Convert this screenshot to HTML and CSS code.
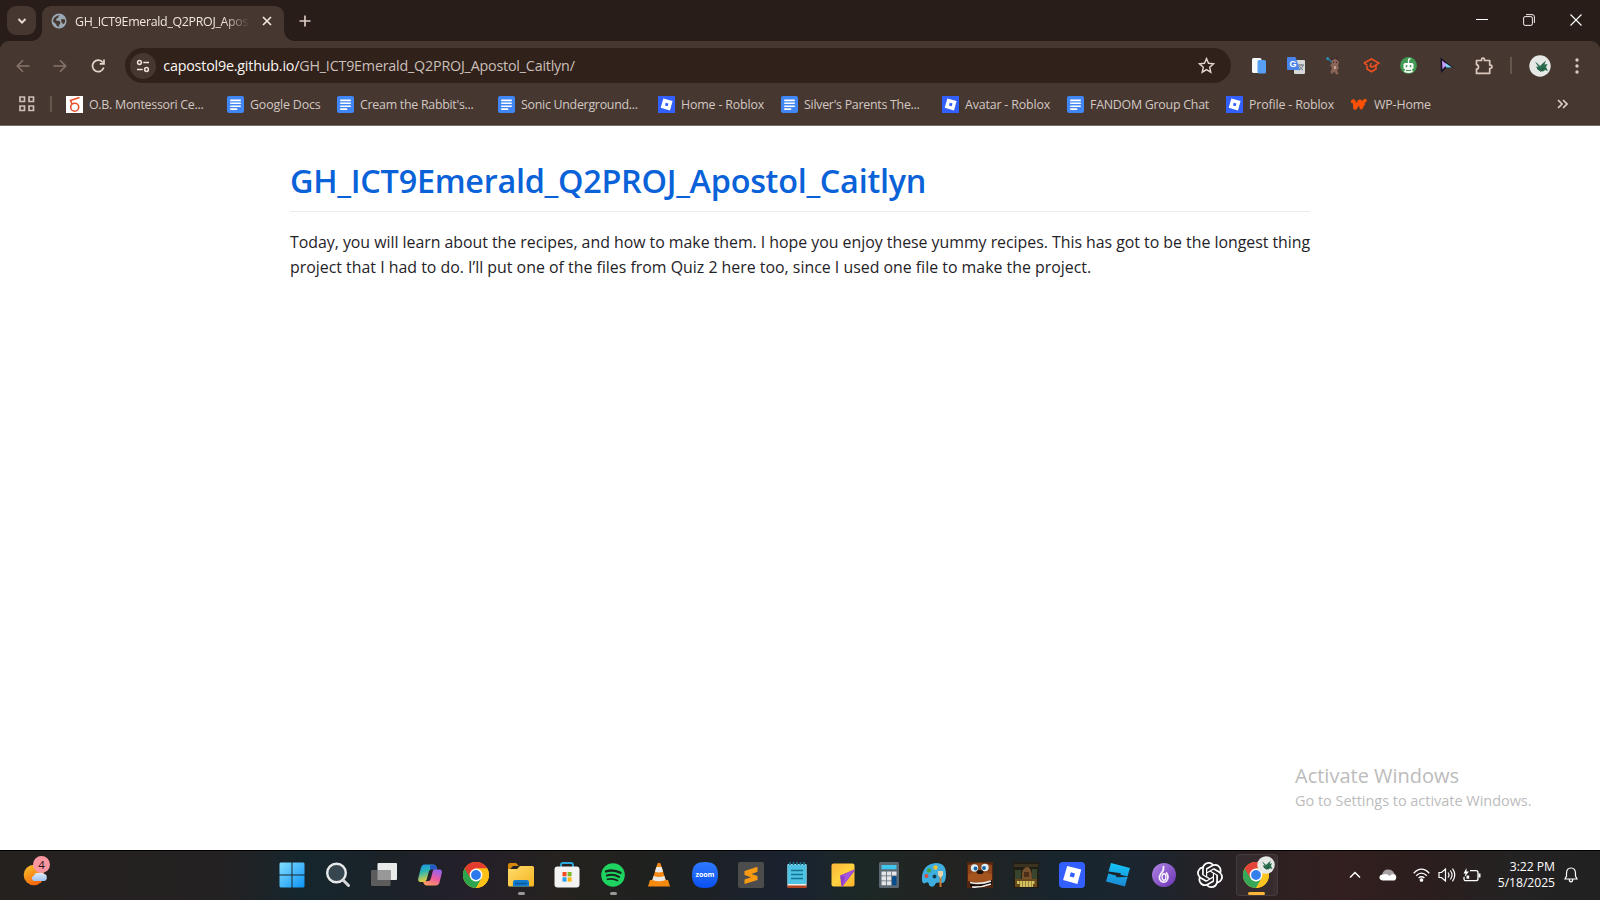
FILE: index.html
```
<!DOCTYPE html>
<html lang="en">
<head>
<meta charset="utf-8">
<title>GH_ICT9Emerald_Q2PROJ_Apostol_Caitlyn</title>
<link rel="stylesheet" href="styles.css">
</head>
<body>
<svg class="defs" width="0" height="0">
  <defs>
    <linearGradient id="gWin" gradientUnits="userSpaceOnUse" x1="0" y1="0" x2="26" y2="26"><stop offset="0" stop-color="#86e0ff"/><stop offset="1" stop-color="#0a91f5"/></linearGradient>
    <linearGradient id="gSun" x1="0" y1="0" x2=".6" y2="1"><stop offset="0" stop-color="#f8c62b"/><stop offset="1" stop-color="#f5620c"/></linearGradient>
    <linearGradient id="gCloud" x1="0" y1="0" x2="0" y2="1"><stop offset="0" stop-color="#e3edfb"/><stop offset="1" stop-color="#9fc0f0"/></linearGradient>
    <linearGradient id="gCopA" x1="0" y1="0" x2=".3" y2="1"><stop offset="0" stop-color="#1b8df0"/><stop offset=".45" stop-color="#2bb5b0"/><stop offset="1" stop-color="#f0cf3a"/></linearGradient>
    <linearGradient id="gCopB" x1=".6" y1="0" x2=".2" y2="1"><stop offset="0" stop-color="#9b62ea"/><stop offset=".5" stop-color="#ee5c9c"/><stop offset="1" stop-color="#ffa05c"/></linearGradient>
    <linearGradient id="gFolder" x1="0" y1="0" x2="1" y2="1"><stop offset="0" stop-color="#ffdc6d"/><stop offset="1" stop-color="#f5b521"/></linearGradient>
    <linearGradient id="gNote" x1="0" y1="0" x2="1" y2="1"><stop offset="0" stop-color="#fdb43a"/><stop offset=".5" stop-color="#ffd23f"/><stop offset="1" stop-color="#ffb52b"/></linearGradient>
    <linearGradient id="gStudio" gradientUnits="userSpaceOnUse" x1="0" y1="0" x2="0" y2="26"><stop offset="0" stop-color="#14c8fb"/><stop offset="1" stop-color="#1c84cf"/></linearGradient>
    <linearGradient id="gPurple" x1="0" y1="0" x2="1" y2="1"><stop offset="0" stop-color="#b184e4"/><stop offset="1" stop-color="#6a34b4"/></linearGradient>
    <linearGradient id="gZoom" x1="0" y1="0" x2="0" y2="1"><stop offset="0" stop-color="#2f7bff"/><stop offset="1" stop-color="#0b50f2"/></linearGradient>
    <symbol id="doc" viewBox="0 0 17 17"><rect width="17" height="17" rx="2" fill="#4086f4"/><path d="M3.200 4.400h10.600M3.200 7.300h10.600M3.200 10.200h10.600M3.200 13.100h7" stroke="#fff" stroke-width="1.600"/></symbol>
    <symbol id="roblox" viewBox="0 0 26 26"><path fill="#fff" fill-rule="evenodd" d="M8.200 3.900 22.300 7.600 18.400 22 4.100 18.100ZM11.800 10.300 10.700 14.500 14.900 15.600 16 11.400Z"/></symbol>
    <symbol id="chrome" viewBox="0 0 26 26"><circle cx="13" cy="13" r="13" fill="#fbc116"/><path d="M13 13 1.700 6.500A13 13 0 0 0 13 26l5.600-9.800Z" fill="#2da44e"/><path d="M1.700 6.500A13 13 0 0 1 24.300 6.600H13L7.400 16.200Z" fill="#e33b2e"/><path d="M13 6.600h11.300a13 13 0 0 1-11.300 19.400l5.700-9.800Z" fill="#fbc116"/><circle cx="13" cy="13" r="6.400" fill="#fff"/><circle cx="13" cy="13" r="4.900" fill="#2b79ec"/></symbol>
    <symbol id="leaf" viewBox="0 0 22 22"><circle cx="11" cy="11" r="10.700" fill="#e6e8e6"/><path d="m6 6.500 2.500 2 2.500 2.500 2.500-2.500L17 5.500l-1.500 4 3-.5-1.500 3 2 4-3-1-2 1.500-5-1.500-2-3.500 2.500.5L7.500 9Z" fill="#2b6b4d"/><path d="m8 13 4 3.500 3-4" stroke="#17503a" fill="none"/></symbol>
  </defs>
</svg>

<div class="screen">
  <header class="browser">
    <div class="tabstrip">
      <button class="tabsearch"><svg width="12" height="12" viewBox="0 0 12 12"><path d="m2.500 4 3.500 3.700L9.500 4" fill="none" stroke="#e8dcd7" stroke-width="1.900"/></svg></button>
      <div class="tab">
        <svg width="16" height="16" viewBox="0 0 16 16"><circle cx="8" cy="8" r="7.500" fill="#9aa8b3"/><path d="M8.500 2q-1.500 1-1 2.500l-2 1-.5 2 3.500.5 1 2-1 1.500-1 2.500q-2-.5-2.500-3L2 8.500q0-5 6.500-6.500Z" fill="#463831"/><path d="m10.500 6 3.500.500q.5 3-1 4.500l-1.500-.500-1.500-2.500Z" fill="#463831"/></svg>
        <span class="tabtitle">GH_ICT9Emerald_Q2PROJ_Apos</span>
        <svg class="x" width="10" height="10" viewBox="0 0 10 10"><path d="m1 1 8 8m0-8L1 9" stroke="#f0e6e2" stroke-width="1.700"/></svg>
      </div>
      <svg class="plus" width="12" height="12" viewBox="0 0 12 12"><path d="M6 .5v11M.5 6h11" stroke="#dccbc4" stroke-width="1.700"/></svg>
      <div class="winctl">
        <svg width="12" height="12" viewBox="0 0 12 12"><path d="M0 5.500h12" stroke="#fff"/></svg>
        <svg width="12" height="12" viewBox="0 0 12 12" fill="none" stroke="#f4f0ee"><rect x=".6" y="2.600" width="8.800" height="8.800" rx="1.500"/><path d="M3 .6h6a2.400 2.400 0 0 1 2.400 2.400v6"/></svg>
        <svg width="12" height="12" viewBox="0 0 12 12"><path d="m.5.5 11 11m0-11-11 11" stroke="#fff" stroke-width="1.100"/></svg>
      </div>
    </div>

    <div class="toolbar">
      <div class="cells nav">
        <i><svg width="14" height="14" viewBox="0 0 14 14" fill="none" stroke="#85746c" stroke-width="1.600"><path d="M13.500 7H1.500M7 1.200 1.300 7 7 12.800"/></svg></i>
        <i><svg width="14" height="14" viewBox="0 0 14 14" fill="none" stroke="#85746c" stroke-width="1.600"><path d="M.5 7h12M7 1.200 12.700 7 7 12.800"/></svg></i>
        <i><svg width="14" height="14" viewBox="0 0 14 14" fill="none" stroke="#e5d5cd" stroke-width="1.700"><path d="M11.800 3.500A5.700 5.700 0 1 0 12.700 8.500M13 .5v4.300H8.700"/></svg></i>
      </div>
      <div class="url">
        <b class="site"><svg width="14" height="14" viewBox="0 0 14 14" fill="none" stroke="#eee1dc" stroke-width="1.500"><circle cx="3.500" cy="3.500" r="1.900"/><path d="M7.300 3.500H13M1 10.500h5.700"/><circle cx="10.500" cy="10.500" r="1.900"/></svg></b>
        <span class="host">capostol9e.github.io/</span><span class="path">GH_ICT9Emerald_Q2PROJ_Apostol_Caitlyn/</span>
        <svg class="star" width="17" height="17" viewBox="0 0 17 17"><path d="m8.500 1.600 2 4.700 5 .5-3.800 3.400 1.100 5-4.300-2.600-4.300 2.600 1.100-5L1.500 6.800l5-.5Z" fill="none" stroke="#e3d6d0" stroke-width="1.400"/></svg>
      </div>
      <div class="cells ext">
        <i><svg width="14" height="16" viewBox="0 0 14 16"><rect width="9.500" height="15" rx="1.500" fill="#f6f8fb"/><rect x="5.500" y="2" width="8.500" height="13.500" rx="1.500" fill="#579ff2"/></svg></i>
        <i><svg width="18" height="17" viewBox="0 0 18 17"><rect x="7" y="3" width="11" height="14" rx="1" fill="#d6d8da"/><path d="M1 0h7.500l4.500 13H1a1 1 0 0 1-1-1V1a1 1 0 0 1 1-1Z" fill="#4a84ea"/><text x="2.500" y="10" class="g">G</text><path d="M11 8h6M14 7v1m2 0c-.5 2.500-2 4-3.500 5m0-4c1 2 2 3.300 3.500 4" stroke="#66737b" fill="none"/></svg></i>
        <i><svg width="16" height="18" viewBox="0 0 16 18"><path d="m1 1 6 5" stroke="#247d9b" stroke-width="1.500"/><circle cx="1.700" cy="1.700" r="1.400" fill="#2c92c0"/><path d="M6 3q2.500-2 5 0l2 2-1 4 1 2-2 2 1.500 4-2.500.5-1.500-3-2 2-1 .5-1-2 1.500-4-2-3 1.500-1Z" fill="#8b6658"/><path d="M6 2h1.500m3-1H12" stroke="#423" stroke-width="2"/><path d="M8 9h2v3H8z" fill="#c3a08d"/><path d="M7 5.500h1m2 0h1" stroke="#222"/></svg></i>
        <i><svg width="17" height="15" viewBox="0 0 17 15" fill="none" stroke="#ec4f20" stroke-width="1.600"><path d="m1 5 7.500-4L16 5l-3 2-2.500 1.500Q8.500 9.500 7 8.200L8.500 5M1 5l3.500 2.300M4 8v3l4.500 2.800L13 11V7"/></svg></i>
        <i><svg width="17" height="17" viewBox="0 0 17 17"><circle cx="8.500" cy="8.500" r="8.400" fill="#439a52"/><path d="M8.500 6V3q.5-1.500 2-1.200" stroke="#fff" fill="none" stroke-width="1.300"/><rect x="3.500" y="6" width="10" height="6" rx="1.500" fill="#fff"/><path d="M6.500 8v2.200m4-2.200v2.200" stroke="#439a52" stroke-width="1.500"/><path d="M5 12h7l1 3q-4.500 2-9 0Z" fill="#edf4ed"/><path d="M6 13.500h5" stroke="#439a52"/></svg></i>
        <i><svg width="14" height="17" viewBox="0 0 14 17"><path d="M.5.5 13.500 10.800 6 11 1 16Z" fill="#171327"/><path d="m2 3.500 7 5.500-4 .5-2.500 3Z" fill="#c79bfa"/><path d="m5.500 6 6.500 4.500H6Z" fill="#7bd8ed"/></svg></i>
        <i><svg width="18" height="18" viewBox="0 0 18 18"><path d="M1.500 3.500h5V2.700a1.500 1.500 0 0 1 3 0v.8h5.200v4.700h.7a1.600 1.600 0 0 1 0 3.200h-.7v5H1.500v-4.200q2-.3 2-2.300t-2-2.300Z" fill="none" stroke="#dcc8bf" stroke-width="1.700" stroke-linejoin="round"/></svg></i>
      </div>
      <span class="sep"></span>
      <div class="cells acct">
        <i><svg width="22" height="22"><use href="#leaf"/></svg></i>
        <i><svg width="4" height="16" viewBox="0 0 4 16" fill="#d9cbc5"><circle cx="2" cy="2" r="1.700"/><circle cx="2" cy="8" r="1.700"/><circle cx="2" cy="14" r="1.700"/></svg></i>
      </div>
    </div>

    <nav class="bookmarks">
      <svg class="apps" width="16" height="16" viewBox="0 0 16 16" fill="none" stroke="#cdbeb7" stroke-width="1.700"><path d="M1 1h4.500v4.500H1zM10 1h4.500v4.500H10zM1 10h4.500v4.500H1zM10 10h4.500v4.500H10z"/></svg>
      <span class="bsep"></span>
      <ul class="links">
        <li class="cut"><svg width="17" height="17" viewBox="0 0 17 17"><rect width="17" height="17" fill="#fff"/><circle cx="8.700" cy="11.200" r="4" fill="none" stroke="#e8502b" stroke-width="1.600"/><path d="m13.500 1.500-9 3 1.700 4" fill="none" stroke="#e8502b" stroke-width="1.600"/></svg>O.B. Montessori Ce...</li>
        <li><svg width="17" height="17"><use href="#doc"/></svg>Google Docs</li>
        <li class="cut"><svg width="17" height="17"><use href="#doc"/></svg>Cream the Rabbit's...</li>
        <li class="cut"><svg width="17" height="17"><use href="#doc"/></svg>Sonic Underground...</li>
        <li><svg class="rb" width="17" height="17"><use href="#roblox"/></svg>Home - Roblox</li>
        <li class="cut"><svg width="17" height="17"><use href="#doc"/></svg>Silver's Parents The...</li>
        <li><svg class="rb" width="17" height="17"><use href="#roblox"/></svg>Avatar - Roblox</li>
        <li class="caps"><svg width="17" height="17"><use href="#doc"/></svg>FANDOM Group Chat</li>
        <li><svg class="rb" width="17" height="17"><use href="#roblox"/></svg>Profile - Roblox</li>
        <li><svg width="17" height="17" viewBox="0 0 17 17"><path d="M1.500 5.500q1.500-1.500 2 1l.3 5.500L8 5.500q1.300-1.200 1.500 1l.2 3.500q2-4.500 4.500-5.500" fill="none" stroke="#ff5008" stroke-width="3.200" stroke-linecap="round" stroke-linejoin="round"/><path d="m3.500 13 4-5m2 5 3.500-6" stroke="#ff5008" stroke-width="3"/></svg>WP-Home</li>
      </ul>
      <svg class="more" width="11" height="10" viewBox="0 0 11 10" fill="none" stroke="#e0d2cb" stroke-width="1.600"><path d="m1 1 4 4-4 4m5-8 4 4-4 4"/></svg>
    </nav>
  </header>

  <main class="page">
    <article class="doc">
      <h1>GH_ICT9Emerald_Q2PROJ_Apostol_Caitlyn</h1>
      <p><span class="first">Today, you will learn about the recipes, and how to make them. I hope you enjoy these yummy recipes. This has got to be the longest thing</span><br>project that I had to do. I’ll put one of the files from Quiz 2 here too, since I used one file to make the project.</p>
    </article>
    <aside class="activate">
      <strong>Activate Windows</strong>
      <span>Go to Settings to activate Windows.</span>
    </aside>
  </main>

  <footer class="taskbar">
    <div class="weather">
      <svg width="30" height="30" viewBox="0 0 30 30"><circle cx="11" cy="18" r="10.300" fill="url(#gSun)"/><path d="M10.500 24a3 3 0 0 1 .5-5.500q1-3.500 5-2.500 3-2 5 1 3 .2 2.800 4-.2 3-2.800 3Z" fill="url(#gCloud)"/></svg>
      <b class="badge">4</b>
    </div>
    <div class="apps-row">
      <i><svg width="26" height="26" viewBox="0 0 26 26" fill="url(#gWin)"><path d="M1.500.5h11v12H.5v-11ZM13.500.5h11l1 1v11h-12ZM.5 13.500h12v12h-11l-1-1ZM13.500 13.500h12v11l-1 1h-11Z"/></svg></i>
      <i><svg width="26" height="26" viewBox="0 0 26 26"><circle cx="11.500" cy="11" r="9.300" fill="#38474f" stroke="#e7e9ea" stroke-width="2.400"/><path d="m18.500 18.500 5 5" stroke="#d5d7d8" stroke-width="3" stroke-linecap="round"/></svg></i>
      <i><svg width="26" height="26" viewBox="0 0 26 26"><rect x="6.500" y="1" width="19.500" height="17" rx="1" fill="#e9eaea"/><rect y="8" width="19.500" height="16" rx="1" fill="#5c5c5c"/><path d="M6.500 8h13v10h-13z" fill="#989898"/></svg></i>
      <i><svg width="26" height="26" viewBox="0 0 26 26"><path d="M7 2.500h9.500q2.500 0 3 2.500l.5 2.500h-3.500q-2.500 0-3.300 3l-1.700 6q-1 3.500-4 3.500H3.500Q.5 20 1.300 16L4 5.500Q5 2.500 7 2.500Z" fill="url(#gCopA)"/><path d="M13 3h4q2 0 2.500 2l.5 2.500h-3.500q-2.500 0-3.300 3Z" fill="#2459c7"/><path d="M19 23.500H9.500q-2 0-2.700-2L6 19.800h2q2.500 0 3.500-3.300l1.700-6q1-3 4-3h5.300q3 0 2.300 3.500L22.500 20.500q-1 3-3.500 3Z" fill="url(#gCopB)"/><path d="m12 9-2.300 8.500q-.5 1.500-2 1.500h4q1.500 0 2-2L16 8.500q.5-1 1.500-1h-3q-2 0-2.500 1.500Z" fill="#24222b"/></svg></i>
      <i><svg width="26" height="26"><use href="#chrome"/></svg></i>
      <i class="run"><svg width="26" height="26" viewBox="0 0 26 26"><path d="M0 3q0-2 2-2h6l3 3h-6L0 9Z" fill="#d58a0c"/><path d="M0 7h9l3-3h12.500q1.500 0 1.500 1.500V23q0 1.500-1.500 1.500h-23Q0 24.500 0 23Z" fill="url(#gFolder)"/><path d="M5 24.500V20q0-2 2-2h12q2 0 2 2v4.500Z" fill="#137bcd"/><path d="M7 21.500h12" stroke="#0b559c" stroke-width="1.500"/></svg></i>
      <i><svg width="26" height="26" viewBox="0 0 26 26"><path d="M7 6V3q0-2 2-2h8q2 0 2 2v3" fill="none" stroke="#29a8e4" stroke-width="1.800"/><rect x=".5" y="4.500" width="25" height="21" rx="3" fill="#f3f3f3"/><path fill="#f04c25" d="M8.500 10h4v4.300h-4z"/><path fill="#7eba28" d="M13.600 10h4v4.300h-4z"/><path fill="#26a2e9" d="M8.500 15.300h4v4.300h-4z"/><path fill="#fdb813" d="M13.600 15.300h4v4.300h-4z"/></svg></i>
      <i class="run"><svg width="26" height="26" viewBox="0 0 26 26"><circle cx="13" cy="13" r="11.800" fill="#1ed35f"/><g fill="none" stroke="#18251c" stroke-linecap="round"><path d="M6 9.300q7.500-2.300 14.500 1.500" stroke-width="2.400"/><path d="M6.800 13.500q6.500-1.800 12.200 1.400" stroke-width="2"/><path d="M7.500 17.300q5.500-1.400 10 1.200" stroke-width="1.700"/></g></svg></i>
      <i><svg width="26" height="26" viewBox="0 0 26 26"><path d="M4 18h18l2 6.500H2Z" fill="#f28a12"/><path d="M11.500 1.500q1.500-1.500 3 0L20 19q-7 4-14 0Z" fill="#f58a13"/><path d="m10.400 5-1.500 4.800q4 1.400 8.200 0L15.600 5Z" fill="#ececec"/><path d="m7.600 14-1.200 4q6.600 2.500 13.200 0l-1.200-4q-5.400 2-10.800 0Z" fill="#e8e8e8"/></svg></i>
      <i><svg width="26" height="26" viewBox="0 0 26 26"><path d="M13 0C22.500 0 26 4.500 26 13s-3.500 13-13 13S0 21.500 0 13 3.500 0 13 0Z" fill="url(#gZoom)"/><text x="13" y="15" text-anchor="middle" class="zm">zoom</text></svg></i>
      <i><svg width="26" height="26" viewBox="0 0 26 26"><rect width="26" height="26" rx="2" fill="#4c4c4c"/><path d="m6.500 9 13-4.300v5L13.500 12l6 2v4l-13 4v-4.500l6.500-2.200-6.500-2.200Z" fill="#f99a13"/></svg></i>
      <i><svg width="26" height="26" viewBox="0 0 26 26"><rect x="3.500" y="2" width="19" height="23.500" rx="1" fill="#f5efe9"/><path d="M3.500 2.500h19V22h-19z" fill="#4fc3e3"/><path d="M3.500 23.500h19V26h-19z" fill="#b24320"/><path d="M6 0v3m3.500-3v3M13 0v3m3.500-3v3M20 0v3" stroke="#1c718c" stroke-width="1.700"/><path d="M7 8.500h12M7 12.500h12M7 16.500h12" stroke="#137594" stroke-width="1.400"/></svg></i>
      <i><svg width="26" height="26" viewBox="0 0 26 26"><rect x="1.500" y="1.500" width="23" height="23" rx="2" fill="url(#gNote)"/><path d="M24.500 7.500 10 13.500 11.500 24.500h1L24.500 9Z" fill="#8b3fc9"/><path d="M24.500 7.500 10 14.500q4-1 5 0l-2.500 10Z" fill="#a655df"/></svg></i>
      <i><svg width="26" height="26" viewBox="0 0 26 26"><rect x="3" width="20" height="26" rx="1.500" fill="#5c6871"/><path d="M5.500 3h15v4.300h-15z" fill="#3fc6ef"/><path d="M5.500 9.500H10v4H5.500zM10.800 9.500h4.500v4h-4.500zM16 9.500h4.500v4H16zM5.500 14.300H10v4.200H5.500zM10.800 14.300h4.500v4.200h-4.500zM5.500 19.300H10v4H5.500zM10.800 19.300h4.500v4h-4.500z" fill="#e3e5e7"/><path d="M16 14.300h4.500v9H16z" fill="#064d8d"/></svg></i>
      <i><svg width="26" height="26" viewBox="0 0 26 26"><path d="M15 1q10 0 10 11 0 10-5 9-3-1-5 0l-2 3q-3 2-5-1 0-4-3.500-2Q.5 23 1 15 2 2 15 1Z" fill="#3eafe0"/><circle cx="5.500" cy="14" r="2" fill="#d84b36"/><circle cx="8" cy="8.500" r="2.200" fill="#45a43e"/><circle cx="14.500" cy="5.500" r="2.200" fill="#efc230"/><circle cx="13.500" cy="14.500" r="2" fill="#173949"/><path d="M19.500 14v11" stroke="#c77b32" stroke-width="2"/><path d="M17 9h5v4l-2.500 3-2.500-3Z" fill="#e9d3aa"/></svg></i>
      <i><svg width="26" height="26" viewBox="0 0 26 26"><rect width="26" height="26" fill="#51250e"/><path d="M1 3q12-4 24 0v15H1Z" fill="#8d4519"/><circle cx="7.500" cy="6" r="3.700" fill="#d9eef8"/><circle cx="18" cy="5.500" r="3.700" fill="#d9eef8"/><circle cx="8.500" cy="6.500" r="1.900" fill="#1763a8"/><circle cx="17" cy="6" r="1.900" fill="#1763a8"/><path d="M1 13q3-3 12-3t12 3v5q-12 5-24 1Z" fill="#a3531d"/><ellipse cx="13" cy="10" rx="3.500" ry="2" fill="#1d1411"/><path d="M2 20q11 3 23-2v5q-10 4-21 2Z" fill="#1b0e0a"/><path d="M3 20.500q10 2.500 21-1.500M5 25q10 .5 19-3" stroke="#f1ede6" stroke-width="1.700" fill="none"/></svg></i>
      <i><svg width="26" height="26" viewBox="0 0 26 26"><rect width="26" height="26" fill="#211e16"/><path d="M1 2h24v3H1z" fill="#3b3320"/><path d="M2 8h6v9H2zM19 7h5v10h-5z" fill="#37452e"/><path d="M9 17q-1-11 4.500-12T19 17Z" fill="#77502c"/><path d="M11 10h5v5h-5z" fill="#4c2f19"/><path d="M2 17h22v8H2z" fill="#694a1d"/><path d="M4 20.500h18M7 23.500h13" stroke="#d2c15f" stroke-width="2.800" stroke-dasharray="2.500 .5"/></svg></i>
      <i><svg width="26" height="26" viewBox="0 0 26 26"><rect width="26" height="26" rx="4" fill="#335fff"/><use href="#roblox" width="26" height="26"/></svg></i>
      <i><svg width="26" height="26" viewBox="0 0 26 26" fill="url(#gStudio)"><path d="m6 1 19 5-2.500 8.500-7-1.800 .4-1.500L3.500 9.500Z"/><path d="m3.300 11.500 8.200 2.200-.4 1.600L22.500 15 20 24.500 1 19.500Z"/></svg></i>
      <i><svg width="26" height="26" viewBox="0 0 26 26"><circle cx="13" cy="13" r="12" fill="url(#gPurple)"/><path d="M12.500 4.500q.5 4-2.500 7-3.500 5 .5 8 3 1.500 5-.500 3-3.500 0-8" fill="none" stroke="#f6f0fc" stroke-width="1.700" stroke-linecap="round"/><ellipse cx="13" cy="15" rx="1.900" ry="3.300" fill="none" stroke="#f6f0fc" stroke-width="1.400"/></svg></i>
      <i><svg width="26" height="26" viewBox="0 0 24 24" fill="#fff"><path d="M22.280 9.820a5.980 5.980 0 0 0-.52-4.910 6.050 6.050 0 0 0-6.510-2.900A6.070 6.070 0 0 0 4.980 4.180a5.980 5.980 0 0 0-4 2.900 6.050 6.050 0 0 0 .74 7.100 5.980 5.980 0 0 0 .51 4.910 6.050 6.050 0 0 0 6.520 2.900A5.980 5.980 0 0 0 13.260 24a6.060 6.060 0 0 0 5.770-4.210 5.990 5.990 0 0 0 4-2.900 6.060 6.060 0 0 0-.75-7.070zm-9.020 12.610a4.480 4.480 0 0 1-2.880-1.040l.14-.08 4.780-2.760a.8.8 0 0 0 .39-.68v-6.740l2.020 1.170a.07.07 0 0 1 .04.05v5.580a4.500 4.500 0 0 1-4.490 4.500zM3.600 18.300a4.470 4.470 0 0 1-.54-3.010l.14.080 4.780 2.760a.77.77 0 0 0 .78 0l5.840-3.370v2.330a.08.08 0 0 1-.03.06L9.740 19.950a4.500 4.500 0 0 1-6.140-1.650zM2.340 7.900a4.490 4.490 0 0 1 2.370-1.970v5.680a.77.77 0 0 0 .39.68l5.810 3.350-2.020 1.170a.08.08 0 0 1-.07 0l-4.830-2.790A4.500 4.500 0 0 1 2.340 7.870zm16.600 3.860-5.840-3.390L15.120 7.200a.08.08 0 0 1 .07 0l4.830 2.790a4.490 4.490 0 0 1-.68 8.100v-5.670a.79.79 0 0 0-.4-.66zm2.010-3.020-.14-.09-4.770-2.780a.78.78 0 0 0-.79 0L9.410 9.230V6.900a.07.07 0 0 1 .03-.06l4.830-2.790a4.500 4.500 0 0 1 6.680 4.660zM8.310 12.860l-2.020-1.160a.08.08 0 0 1-.04-.06V6.070a4.500 4.500 0 0 1 7.380-3.450l-.14.08L8.700 5.460a.8.8 0 0 0-.39.68zm1.100-2.370 2.600-1.500 2.610 1.500v3l-2.600 1.500-2.610-1.500z"/></svg></i>
      <i class="active"><svg width="26" height="26"><use href="#chrome"/></svg><svg class="who" width="18" height="18"><use href="#leaf"/></svg></i>
    </div>
    <div class="tray">
      <svg class="chev" width="12" height="8" viewBox="0 0 12 8"><path d="m1 6.500 5-5 5 5" fill="none" stroke="#fff" stroke-width="1.500"/></svg>
      <svg class="cloud" width="18" height="12" viewBox="0 0 18 12"><path d="M3 6Q4 .5 9 .5T15.500 5L11 8Z" fill="#a8a1a1"/><path d="M3.500 11.500Q0 11 .5 7.800 1.200 5 4.500 5.500 8 4 10.500 7q3-3.500 6-1.200 2 3.700-1 5.700Z" fill="#fff"/></svg>
      <svg class="wifi" width="17" height="14" viewBox="0 0 17 14" fill="none" stroke="#fff" stroke-width="1.300"><path d="M.7 5.200q7.800-8 15.600 0M3.200 7.700q5.300-5.200 10.600 0M5.600 10q2.900-2.600 5.800 0"/><circle cx="8.500" cy="12" r="1.200" fill="#fff"/></svg>
      <svg class="vol" width="18" height="14" viewBox="0 0 18 14" fill="none" stroke="#fff" stroke-width="1.200"><path d="M1 4.500h2.500L7.500 1v12L3.500 9.500H1ZM10 4.500q2 2.500 0 5M12.300 2.500q3.500 4.500 0 9M14.500.7q4.500 6.300 0 12.600"/></svg>
      <svg class="bat" width="18" height="14" viewBox="0 0 18 14" fill="none" stroke="#fff" stroke-width="1.300"><path d="M7 2.700h6q2 0 2 2v6q0 2-2 2H3q-2 0-2-2V9"/><path d="M16.500 5.500v4" stroke-width="2"/><path d="M3.500 0 .5 5.500h2L1.500 9 6 3.500H3.500Z" fill="#fff" stroke="none"/><path d="M3.500 7.500h2.700v3.200H3.500z" fill="#fff" stroke="none"/></svg>
      <div class="clock"><span>3:22 PM</span><span>5/18/2025</span></div>
      <svg class="bell" width="14" height="16" viewBox="0 0 14 16" fill="none" stroke="#fff" stroke-width="1.200"><path d="M2.500 6.500Q2.500 1 7 1t4.500 5.500V9L13 12H1l1.500-3ZM5.300 12.500q0 2.300 1.700 2.300t1.700-2.300"/></svg>
    </div>
  </footer>
</div>
</body>
</html>
```
FILE: styles.css
```
* { box-sizing: border-box; }
body { margin: 0; font-family: "Open Sans", "Noto Sans", sans-serif; }
svg { display: block; flex: none; }
.defs { position: absolute; }
.screen { width: 1600px; height: 900px; display: flex; flex-direction: column; overflow: hidden; background: #fff; }

/* browser chrome */
.browser { height: 126px; flex: none; background: #281d19; border-bottom: 1px solid #756b66; display: flex; flex-direction: column; }
.tabstrip { height: 41px; display: flex; padding: 6px 0 0 7px; }
.tabsearch { width: 29px; height: 29px; border: 0; border-radius: 9px; background: #463831; padding: 0; display: grid; place-items: center; }
.tab { position: relative; width: 242px; height: 35px; margin-left: 6px; background: #463831; border-radius: 9px 9px 0 0; display: flex; align-items: center; padding: 0 0 5px 9px; }
.tab::before, .tab::after { content: ""; position: absolute; bottom: 0; width: 10px; height: 10px; }
.tab::before { left: -10px; background: radial-gradient(circle at 0 0, transparent 9.5px, #463831 10px); }
.tab::after { right: -10px; background: radial-gradient(circle at 100% 0, transparent 9.5px, #463831 10px); }
.tabtitle { width: 175px; margin-left: 8px; white-space: nowrap; overflow: hidden; font-size: 12.400px; letter-spacing: -.31px; color: #f0e5e0; -webkit-mask-image: linear-gradient(90deg, #000 148px, transparent 175px); mask-image: linear-gradient(90deg, #000 148px, transparent 175px); }
.x { margin-left: 11.500px; }
.plus { margin: 9px 0 0 15px; }
.winctl { margin: 8px 18px 0 auto; display: flex; gap: 35px; }

.toolbar { height: 42px; background: #463831; border-radius: 9px 9px 0 0; display: flex; align-items: center; padding: 7px 0 0 4.500px; }
.cells { display: grid; grid-auto-flow: column; grid-auto-columns: 37.600px; }
.cells i { display: grid; place-items: center; }
.nav { margin-left: -.5px; }
.url { width: 1106px; height: 35px; margin: 0 9px 0 8px; border-radius: 18px; background: #30221b; display: flex; align-items: center; padding-left: 5px; font-size: 14.300px; letter-spacing: -.2px; white-space: nowrap; }
.site { width: 26px; height: 26px; border-radius: 50%; background: #463831; display: grid; place-items: center; margin-right: 7.500px; }
.host { color: #fbf6f3; }
.path { color: #cbbfb9; }
.star { margin: 0 16px 0 auto; }
.sep { width: 2px; height: 17px; margin: 0 8.500px 0 7.500px; background: #67564d; }
.g { font: bold 9px "Liberation Sans", sans-serif; fill: #fff; }

.bookmarks { height: 42px; background: #463831; display: flex; align-items: center; padding: 0 32px 0 19px; }
.bsep { width: 2px; height: 16px; margin: 0 14px 0 15px; background: #67564d; }
.links { list-style: none; margin: 0; padding: 0; display: grid; grid-template-columns: 161px 110px 161px 160px 123px 161px 125px 159px 125px auto; font-size: 12.400px; letter-spacing: -.16px; color: #d3c7c1; white-space: nowrap; }
.links li { display: flex; align-items: center; gap: 6px; }
.links .cut { letter-spacing: -.27px; }
.links .caps { letter-spacing: -.25px; }
.rb { background: #335fff; }
.more { margin-left: auto; }

/* page */
.page { flex: 1; display: flex; flex-direction: column; }
.doc { width: 1020px; margin: 31px 0 0 290px; }
h1 { margin: 0; height: 55px; line-height: 47px; font-size: 32.400px; font-weight: 600; letter-spacing: -.28px; color: #0a62d8; border-bottom: 1px solid #ececee; white-space: nowrap; }
p { margin: 18px 0 0; font-size: 15.900px; line-height: 25px; color: #1f2328; white-space: nowrap; }
.first { letter-spacing: -.026px; }
.activate { margin: auto 0 38px 1295px; display: flex; flex-direction: column; color: #bcbcbc; }
.activate strong { font-size: 20px; font-weight: 400; line-height: 27px; }
.activate span { font-size: 14.500px; line-height: 23px; letter-spacing: -.03px; }

/* taskbar */
.taskbar { height: 50px; flex: none; border-top: 1px solid #000; padding-bottom: 1.500px; display: flex; align-items: center; background: linear-gradient(90deg, #25211f 0, #242122 220px, #16262d 300px, #1b2228 390px, #25202a 470px, #25221f 560px, #1f211f 650px, #1a2230 790px, #1c2826 860px, #232321 950px, #18252d 1060px, #1b252f 1140px, #2a2123 1240px, #331f1f 1340px, #2b1e1e 1430px, #242222 1510px, #212121); }
.weather { position: relative; width: 30px; margin-left: 23px; margin-top: -5px; }
.badge { position: absolute; left: 10px; top: -1px; width: 17px; height: 17px; border-radius: 50%; background: #fb96a1; color: #271516; font-size: 11.500px; font-weight: 400; line-height: 17px; text-align: center; }
.apps-row { margin-left: 216px; display: grid; grid-template-columns: repeat(22, 45.900px); }
.apps-row i { position: relative; height: 42px; display: grid; place-items: center; font-style: normal; }
.run::after { content: ""; position: absolute; bottom: 1px; left: 19.500px; width: 7px; height: 3px; border-radius: 2px; background: #999; }
.active::before { content: ""; position: absolute; inset: 0 1px 0 3px; border-radius: 4px; background: #ffffff0d; border: 1px solid #ffffff12; box-shadow: inset -4px 0 #ffffff06; }
.active::after { content: ""; position: absolute; bottom: 1px; left: 15px; width: 17px; height: 3px; border-radius: 2px; background: #ffb638; }
.who { position: absolute; left: 24px; top: 2px; }
.zm { font: bold 7px "Open Sans", sans-serif; fill: #fff; }
.tray { display: flex; align-items: center; margin-left: auto; padding-right: 22px; }
.cloud { margin-left: 18.500px; }
.wifi { margin-left: 16px; }
.vol { margin-left: 8px; }
.bat { margin-left: 7px; }
.clock { width: 74px; padding-top: 1px; display: flex; flex-direction: column; text-align: right; color: #fff; font-size: 12.200px; line-height: 16.500px; letter-spacing: -.05px; }
.bell { margin-left: 9px; }
```
